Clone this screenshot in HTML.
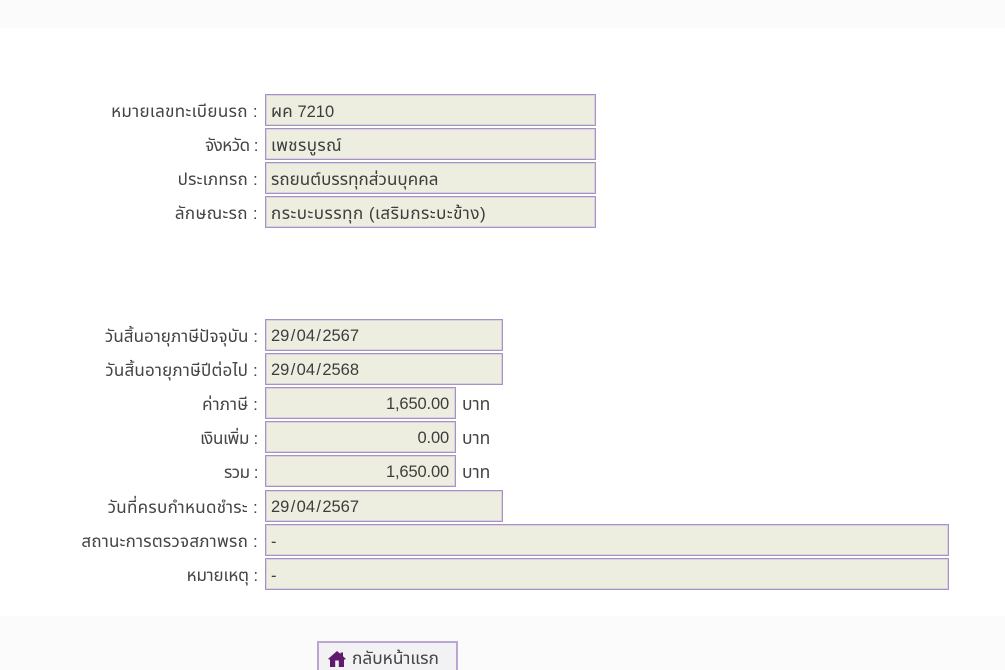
<!DOCTYPE html>
<html lang="th"><head><meta charset="utf-8"><title>ตรวจสอบข้อมูลรถ</title>
<style>
html,body{margin:0;padding:0;background:#fff;width:1005px;height:670px;overflow:hidden;}
body{position:relative;font-family:"Liberation Sans","Noto Sans Thai","DejaVu Sans",sans-serif;font-size:16.5px;color:#3d3d3d;}
.bar{position:absolute;left:0;width:1005px;background:#fbfbfb;}
.l{position:absolute;left:0;width:258px;height:32px;line-height:36px;text-align:right;white-space:nowrap;color:#444;font-size:17px;}
.i{position:absolute;left:265px;height:30px;line-height:34px;border:1px solid #a892c4;box-shadow:inset 0 0 0 1px #d9d0e0;background:#eeeee0;padding:0 5px;white-space:nowrap;color:#3d3d3d;}
.n{line-height:32px;}
.r{text-align:right;padding:0 6px 0 5px;letter-spacing:-.15px;line-height:32px;}
.t{font-size:17px;}
.s{display:inline-block;width:7.3px;text-align:center;}
.u{position:absolute;left:462px;height:32px;line-height:34px;color:#444;font-size:17.5px;}
.b{position:absolute;left:317px;top:641px;width:141px;height:29px;border:solid #b9a6d2;border-width:2px 2px 0 2px;background:#f2f1f3;box-sizing:border-box;}
.b span{position:absolute;left:33px;top:3px;line-height:25px;color:#444;white-space:nowrap;font-size:17.3px;}
.b svg{position:absolute;left:9px;top:8px;}
</style></head><body>
<div class="bar" style="top:0;height:28px"></div>
<div class="bar" style="top:616px;height:54px"></div>

<div class="l" style="top:94px;letter-spacing:.35px">หมายเลขทะเบียนรถ :</div>
<div class="i" style="top:94px;width:319px"><span class="t" style="letter-spacing:.2px">ผค</span> <span>7210</span></div>
<div class="l" style="top:128px;letter-spacing:-.5px">จังหวัด :</div>
<div class="i t" style="top:128px;width:319px;letter-spacing:.4px">เพชรบูรณ์</div>
<div class="l" style="top:162px;letter-spacing:.25px">ประเภทรถ :</div>
<div class="i t" style="top:162px;width:319px;letter-spacing:.05px">รถยนต์บรรทุกส่วนบุคคล</div>
<div class="l" style="top:196px;letter-spacing:.35px">ลักษณะรถ :</div>
<div class="i t" style="top:196px;width:319px;letter-spacing:.5px">กระบะบรรทุก (เสริมกระบะข้าง)</div>

<div class="l" style="top:319px;letter-spacing:.05px">วันสิ้นอายุภาษีปัจจุบัน :</div>
<div class="i n" style="top:319px;width:226px">29<span class="s">/</span>04<span class="s">/</span>2567</div>
<div class="l" style="top:353px;letter-spacing:.2px">วันสิ้นอายุภาษีปีต่อไป :</div>
<div class="i n" style="top:353px;width:226px">29<span class="s">/</span>04<span class="s">/</span>2568</div>
<div class="l" style="top:387px;letter-spacing:.15px">ค่าภาษี :</div>
<div class="i r" style="top:387px;width:178px">1,650.00</div><div class="u" style="top:387px">บาท</div>
<div class="l" style="top:421px;letter-spacing:-.3px">เงินเพิ่ม :</div>
<div class="i r" style="top:421px;width:178px">0.00</div><div class="u" style="top:421px">บาท</div>
<div class="l" style="top:455px;letter-spacing:-.5px">รวม :</div>
<div class="i r" style="top:455px;width:178px">1,650.00</div><div class="u" style="top:455px">บาท</div>
<div class="l" style="top:490px;letter-spacing:.3px">วันที่ครบกำหนดชำระ :</div>
<div class="i n" style="top:490px;width:226px">29<span class="s">/</span>04<span class="s">/</span>2567</div>
<div class="l" style="top:524px;letter-spacing:.25px">สถานะการตรวจสภาพรถ :</div>
<div class="i" style="top:524px;width:672px">-</div>
<div class="l" style="top:558px;letter-spacing:-.15px">หมายเหตุ :</div>
<div class="i" style="top:558px;width:672px">-</div>

<div class="b">
<svg width="18" height="16" viewBox="0 0 18 16"><path fill="#5f1a6e" fill-rule="evenodd" d="M9 0 L12.5 3 V1.5 H15 V5.2 L18 8 L16 8.8 V16 H2 V8.8 L0 8 Z M7.2 9.5 V16 H10.8 V9.5 Z"/></svg>
<span>กลับหน้าแรก</span>
</div>
</body></html>
